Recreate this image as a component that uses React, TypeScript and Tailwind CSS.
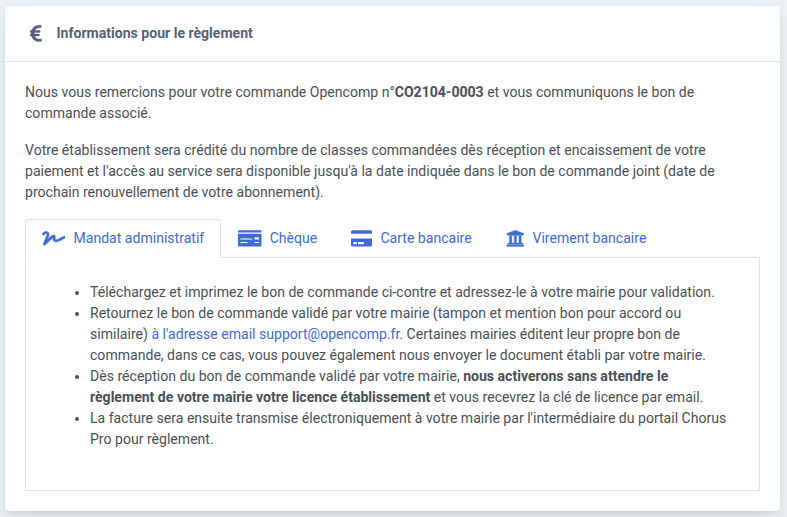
import type { ReactNode } from "react";
import { FaEuroSign, FaSignature, FaMoneyCheck, FaCreditCard, FaUniversity } from "react-icons/fa";

function Tab({ icon, label, active = false }: { icon: ReactNode; label: string; active?: boolean }) {
  return (
    <button
      className={
        active
          ? "-mb-px flex h-[39px] items-center rounded-t border border-[#dee2e6] border-b-white bg-white px-4"
          : "-mb-px flex h-[39px] items-center border border-transparent px-4"
      }
    >
      <span className="mb-px">{icon}</span>
      <span className="ml-2 whitespace-nowrap">{label}</span>
    </button>
  );
}

export default function App() {
  return (
    <div className="h-[517px] overflow-hidden bg-[#eef2f5] pt-[6px] pl-[5px] font-[Roboto,sans-serif] text-[14.07px] leading-[21px] text-[#495057] antialiased">
      <section className="h-[505px] w-[775px] rounded bg-white shadow-[0_7.5px_35px_rgba(4,9,20,0.03),0_15px_22.5px_rgba(4,9,20,0.03),0_4px_8.5px_rgba(4,9,20,0.05),0_2px_3px_rgba(4,9,20,0.03)]">
        <header className="flex h-14 items-center border-b border-[#dfe2ec] pl-5 font-bold text-[#565f78]">
          <span className="flex w-[23.46px] justify-center pr-px">
            <FaEuroSign strokeWidth={10} className="h-[18.77px] w-[11.73px]" />
          </span>
          <h1 className="ml-2">Informations pour le règlement</h1>
        </header>
        <div className="px-5 pt-5">
          <p className="mb-4">
            Nous vous remercions pour votre commande Opencomp n°<b>CO2104-0003</b> et vous communiquons le bon de<br />
            commande associé.
          </p>
          <p className="mb-4">
            Votre établissement sera crédité du nombre de classes commandées dès réception et encaissement de votre<br />
            paiement et l'accès au service sera disponible jusqu'à la date indiquée dans le bon de commande joint (date de<br />
            prochain renouvellement de votre abonnement).
          </p>
          <nav className="flex border-b border-[#dee2e6] text-[#3f6ad8]">
            <Tab active icon={<FaSignature strokeWidth={10} className="h-[18.77px] w-[23.46px]" />} label="Mandat administratif" />
            <Tab icon={<FaMoneyCheck className="h-[18.77px] w-[23.46px]" />} label="Chèque" />
            <Tab icon={<FaCreditCard className="h-[18.77px] w-[21.12px]" />} label="Carte bancaire" />
            <Tab icon={<FaUniversity strokeWidth={8} className="h-[18.77px] w-[18.77px]" />} label="Virement bancaire" />
          </nav>
          <div className="h-[233px] border border-t-0 border-[#dee2e6] px-6 pt-6">
            <ul className="list-disc pl-10">
              <li>Téléchargez et imprimez le bon de commande ci-contre et adressez-le à votre mairie pour validation.</li>
              <li>
                Retournez le bon de commande validé par votre mairie (tampon et mention bon pour accord ou<br />
                similaire) <a className="text-[#3f6ad8]">à l'adresse email support@opencomp.fr</a>. Certaines mairies éditent leur propre bon de<br />
                commande, dans ce cas, vous pouvez également nous envoyer le document établi par votre mairie.
              </li>
              <li>
                Dès réception du bon de commande validé par votre mairie, <b>nous activerons sans attendre le<br />
                règlement de votre mairie votre licence établissement</b> et vous recevrez la clé de licence par email.
              </li>
              <li>
                La facture sera ensuite transmise électroniquement à votre mairie par l'intermédiaire du portail Chorus<br />
                Pro pour règlement.
              </li>
            </ul>
          </div>
        </div>
      </section>
    </div>
  );
}
